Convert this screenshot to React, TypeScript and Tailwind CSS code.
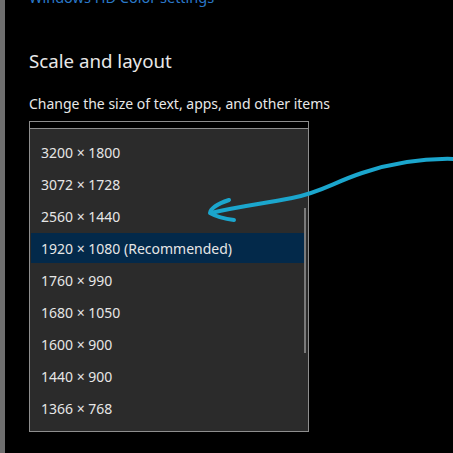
import React from "react";

const items = [
  "3200 × 1800",
  "3072 × 1728",
  "2560 × 1440",
  "1920 × 1080 (Recommended)",
  "1760 × 990",
  "1680 × 1050",
  "1600 × 900",
  "1440 × 900",
  "1366 × 768",
];

export default function App() {
  return (
    <div
      className="relative w-[453px] h-[453px] bg-black flex overflow-hidden"
      style={{ fontFamily: '"Noto Sans", "Open Sans", sans-serif' }}
    >
      <div className="w-[5px] shrink-0 bg-[#6f6f6f]" />
      <div className="pl-[24px] flex flex-col">
        <div className="mt-[-13px] text-[14.5px] leading-[20px] text-[#2a78c8] whitespace-nowrap">
          Windows HD Color settings
        </div>
        <div className="mt-[40px] text-[18.7px] leading-[28px] text-[#e8e8e8] whitespace-nowrap">
          Scale and layout
        </div>
        <div className="mt-[19px] text-[14px] leading-[20px] text-[#e8e8e8] whitespace-nowrap">
          Change the size of text, apps, and other items
        </div>
        <div className="mt-[7px] w-[280px] h-[311px] border border-[#8e8e8e] flex flex-col">
          <div className="h-[6px] bg-black shrink-0" />
          <div className="flex-1 border-t border-[#8e8e8e] bg-[#2b2b2b] flex">
            <div className="flex-1 pt-[6px] pl-[1px]">
              {items.map((t, i) => (
                <div key={t} className="h-[32px] pt-[2px]">
                  <div
                    className={
                      "h-[30px] flex items-center pl-[10px] text-[14px] text-[#e6e6e6] whitespace-nowrap " +
                      (i === 3 ? "bg-[#03294a]" : "")
                    }
                  >
                    {t}
                  </div>
                </div>
              ))}
            </div>
            <div className="w-[4px] shrink-0 pt-[79px]">
              <div className="w-[2px] h-[145px] bg-[#7a7a7a]" />
            </div>
          </div>
        </div>
      </div>
      <svg
        className="absolute left-0 top-0 pointer-events-none"
        width="453"
        height="453"
        viewBox="0 0 453 453"
        fill="none"
      >
        <path
          d="M456 159 C 425 158, 392 163, 362 173 S 322 192, 292 198 S 240 206, 211 213"
          stroke="#1ba6cd"
          strokeWidth="4"
          strokeLinecap="round"
        />
        <path
          d="M229 200 C 220 203, 211 207, 210 213 C 217 217, 226 219, 234 220"
          stroke="#1ba6cd"
          strokeWidth="4"
          strokeLinecap="round"
          strokeLinejoin="round"
        />
      </svg>
    </div>
  );
}
